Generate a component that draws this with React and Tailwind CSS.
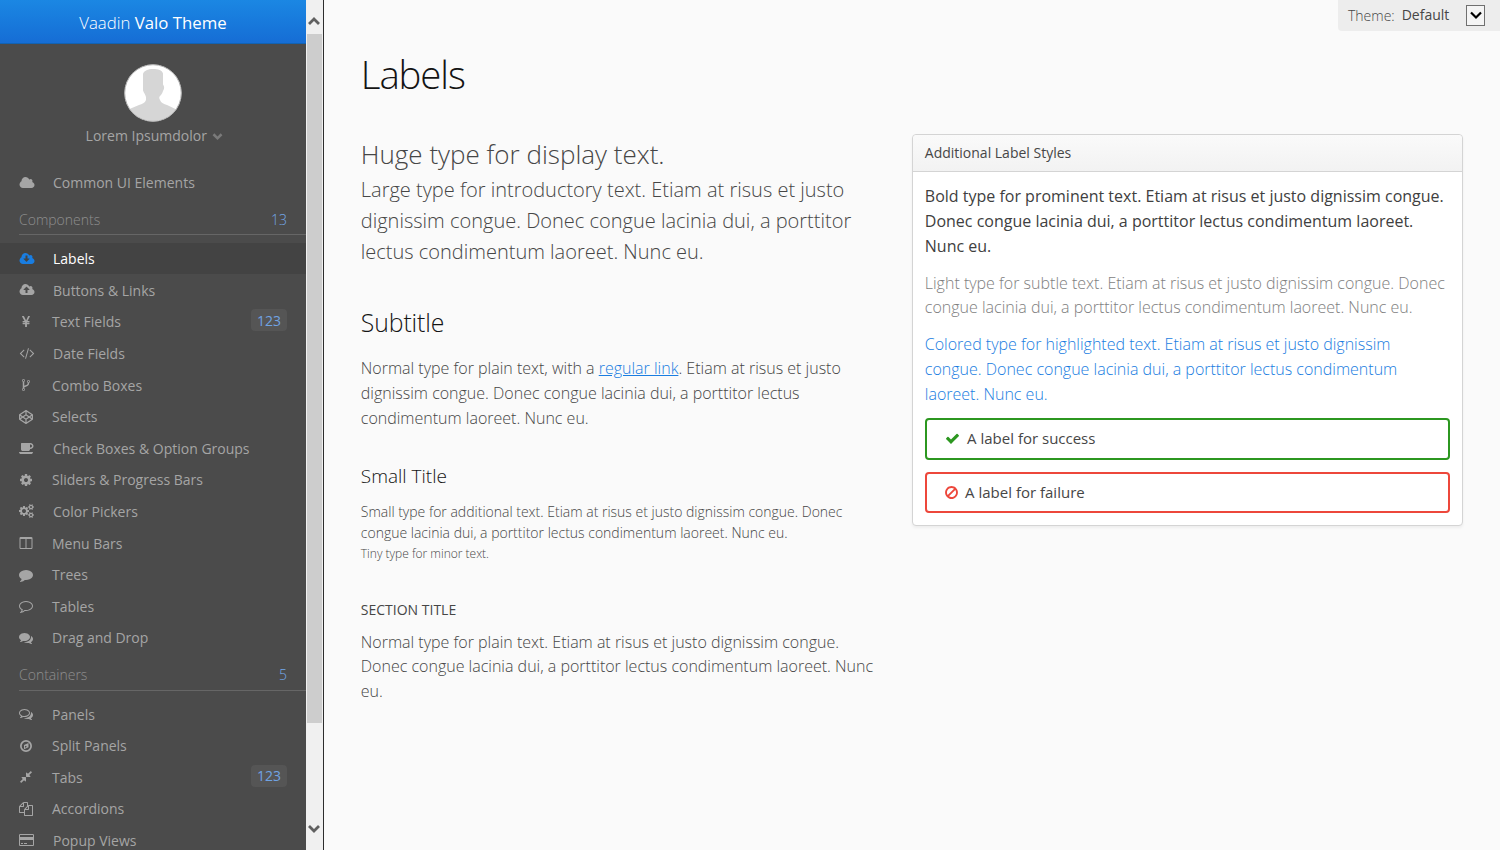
import React from "react";
import { FaCodepen } from "react-icons/fa";

const cloudBody =
  "q0 159-112.5 271.5t-271.5 112.5h-1088q-185 0-316.5-131.5t-131.5-316.5q0-130 70-240t188-165q-2-30-2-43 0-212 150-362t362-150q156 0 285.5 87t188.5 231q71-62 166-62 106 0 181 75t75 181q0 76-41 138 130 31 213.5 135.5t83.5 238.5z";

const ICONS = {
  cloud: [2048, "M1984 1152" + cloudBody],
  download: [2048, "M1344 864q0-14-9-23t-23-9h-224v-352q0-13-9.5-22.5t-22.5-9.5h-192q-13 0-22.5 9.5t-9.5 22.5v352h-224q-13 0-22.5 9.5t-9.5 22.5q0 14 9 23l352 352q9 9 23 9t23-9l351-351q10-12 10-24zM1984 1152" + cloudBody],
  upload: [2048, "M1344 864q0-14-9-23l-352-352q-9-9-23-9t-23 9l-351 351q-10 12-10 24 0 14 9 23t23 9h224v352q0 13 9.5 22.5t22.5 9.5h192q13 0 22.5-9.5t9.5-22.5v-352h224q13 0 22.5-9.5t9.5-22.5zM1984 1152" + cloudBody],
  yen: [1792, "M985.5 1536h-172q-13 0-22.5-9t-9.5-23v-330h-288q-13 0-22.5-9t-9.5-23v-103q0-13 9.5-22.5t22.5-9.5h288v-85h-288q-13 0-22.5-9t-9.5-23v-104q0-13 9.5-22.5t22.5-9.5h214l-321-578q-8-16 0-32 10-16 28-16h194q19 0 29 18l215 425q19 38 56 125 10-24 30.5-68t27.5-61l191-420q8-19 29-19h191q17 0 27 16 9 14 1 31l-313 579h215q13 0 22.5 9.5t9.5 22.5v104q0 14-9.5 23t-22.5 9h-290v85h290q13 0 22.5 9.5t9.5 22.5v103q0 14-9.5 23t-22.5 9h-290v330q0 13-9.5 22.5t-22.5 9.5z"],
  code: [2048, "M681 1399l-50 50q-10 10-23 10t-23-10l-466-466q-10-10-10-23t10-23l466-466q10-10 23-10t23 10l50 50q10 10 10 23t-10 23l-393 393 393 393q10 10 10 23t-10 23zm591-1067l-373 1291q-4 13-15.5 19.5t-23.5 2.5l-62-17q-13-4-19.5-15.5t-2.5-24.5l373-1291q4-13 15.5-19.5t23.5-2.5l62 17q13 4 19.5 15.5t2.5 24.5zm657 651l-466 466q-10 10-23 10t-23-10l-50-50q-10-10-10-23t10-23l393-393-393-393q-10-10-10-23t10-23l50-50q10-10 23-10t23 10l466 466q10 10 10 23t-10 23z"],
  fork: [1792, "M672 1472q0-40-28-68t-68-28-68 28-28 68 28 68 68 28 68-28 28-68zm0-1152q0-40-28-68t-68-28-68 28-28 68 28 68 68 28 68-28 28-68zm640 128q0-40-28-68t-68-28-68 28-28 68 28 68 68 28 68-28 28-68zm96 0q0 52-26 96.5t-70 69.5q-2 287-226 414-67 38-203 81-128 40-169.5 71t-41.5 100v26q44 25 70 69.5t26 96.5q0 80-56 136t-136 56-136-56-56-136q0-52 26-96.5t70-69.5v-820q-44-25-70-69.5t-26-96.5q0-80 56-136t136-56 136 56 56 136q0 52-26 96.5t-70 69.5v497q54-26 154-57 55-17 87.5-29.5t70.5-31 59-39.5 40.5-51 28-69.5 8.5-91.5q-44-25-70-69.5t-26-96.5q0-80 56-136t136-56 136 56 56 136z"],
  coffee: [1920, "M1664 640q0-80-56-136t-136-56h-64v384h64q80 0 136-56t56-136zm-1664 768h1792q0 106-75 181t-181 75h-1280q-106 0-181-75t-75-181zm1856-768q0 159-112.5 271.5t-271.5 112.5h-64v32q0 92-66 158t-158 66h-704q-92 0-158-66t-66-158v-736q0-26 19-45t45-19h1152q159 0 271.5 112.5t112.5 271.5z"],
  cog: [1792, "M1152 896q0-106-75-181t-181-75-181 75-75 181 75 181 181 75 181-75 75-181zm512-109v222q0 12-8 23t-20 13l-185 28q-19 54-39 91 35 50 107 138 10 12 10 25t-9 23q-27 37-99 108t-94 71q-12 0-26-9l-138-108q-44 23-91 38-16 136-29 186-7 28-36 28h-222q-14 0-24.5-8.5t-11.5-21.5l-28-184q-49-16-90-37l-141 107q-10 9-25 9-14 0-25-11-126-114-165-168-7-10-7-23 0-12 8-23 15-21 51-66.5t54-70.5q-27-50-41-99l-183-27q-13-2-21-12.5t-8-23.5v-222q0-12 8-23t19-13l186-28q14-46 39-92-40-57-107-138-10-12-10-24 0-10 9-23 26-36 98.5-107.5t94.5-71.5q13 0 26 10l138 107q44-23 91-38 16-136 29-186 7-28 36-28h222q14 0 24.5 8.5t11.5 21.5l28 184q49 16 90 37l142-107q9-9 24-9 13 0 25 10 129 119 165 170 7 8 7 22 0 12-8 23-15 21-51 66.5t-54 70.5q26 50 41 98l183 28q13 2 21 12.5t8 23.5z"],
  cogs: [1920, "M896 896q0-106-75-181t-181-75-181 75-75 181 75 181 181 75 181-75 75-181zm768 512q0-52-38-90t-90-38-90 38-38 90q0 53 37.5 90.5t90.5 37.5 90.5-37.5 37.5-90.5zm0-1024q0-52-38-90t-90-38-90 38-38 90q0 53 37.5 90.5t90.5 37.5 90.5-37.5 37.5-90.5zm-384 421v185q0 10-7 19.5t-16 10.5l-155 24q-11 35-32 76 34 48 90 115 7 11 7 20 0 12-7 19-23 30-82.5 89.5t-78.5 59.5q-11 0-21-7l-115-90q-37 19-77 31-11 108-23 155-7 24-30 24h-186q-11 0-20-7.5t-10-17.5l-23-153q-34-10-75-31l-118 89q-7 7-20 7-11 0-21-8-144-133-144-160 0-9 7-19 10-14 41-53t47-61q-23-44-35-82l-152-24q-10-1-17-9.5t-7-19.5v-185q0-10 7-19.5t16-10.5l155-24q11-35 32-76-34-48-90-115-7-11-7-20 0-12 7-20 22-30 82-89t79-59q11 0 21 7l115 90q34-18 77-32 11-108 23-154 7-24 30-24h186q11 0 20 7.5t10 17.5l23 153q34 10 75 31l118-89q8-7 20-7 11 0 21 8 144 133 144 160 0 8-7 19-12 16-42 54t-45 60q23 48 34 82l152 23q10 2 17 10.5t7 19.5zm640 533v140q0 16-149 31-12 27-30 52 51 113 51 138 0 4-4 7-122 71-124 71-8 0-46-47t-52-68q-20 2-30 2t-30-2q-14 21-52 68t-46 47q-2 0-124-71-4-3-4-7 0-25 51-138-18-25-30-52-149-15-149-31v-140q0-16 149-31 13-29 30-52-51-113-51-138 0-4 4-7 4-2 35-20t59-34 30-16q8 0 46 46.5t52 67.5q20-2 30-2t30 2q51-71 92-112l6-2q4 0 124 70 4 3 4 7 0 25-51 138 17 23 30 52 149 15 149 31zm0-1024v140q0 16-149 31-12 27-30 52 51 113 51 138 0 4-4 7-122 71-124 71-8 0-46-47t-52-68q-20 2-30 2t-30-2q-14 21-52 68t-46 47q-2 0-124-71-4-3-4-7 0-25 51-138-18-25-30-52-149-15-149-31v-140q0-16 149-31 13-29 30-52-51-113-51-138 0-4 4-7 4-2 35-20t59-34 30-16q8 0 46 46.5t52 67.5q20-2 30-2t30 2q51-71 92-112l6-2q4 0 124 70 4 3 4 7 0 25-51 138 17 23 30 52 149 15 149 31z"],
  columns: [1792, "M224 1536h608v-1152h-640v1120q0 13 9.5 22.5t22.5 9.5zm1376-32v-1120h-640v1152h608q13 0 22.5-9.5t9.5-22.5zm128-1216v1216q0 66-47 113t-113 47h-1344q-66 0-113-47t-47-113v-1216q0-66 47-113t113-47h1344q66 0 113 47t47 113z"],
  comment: [1792, "M1792 896q0 174-120 321.5t-326 233-450 85.5q-70 0-145-8-198 175-460 242-49 14-114 22-17 2-30.5-9t-17.5-29v-1q-3-4-.5-12t2-10 4.5-9.5l6-9 7-8.5 8-9q7-8 31-34.5t34.5-38 31-39.5 32.5-51 27-59 26-76q-157-89-247.5-220t-90.5-281q0-130 71-248.5t191-204.5 286-136.5 348-50.5q244 0 450 85.5t326 233 120 321.5z"],
  commentO: [1792, "M896 384q-204 0-381.5 69.5t-282 187.5-104.5 255q0 112 71.5 213.5t201.5 175.5l87 50-27 96q-24 91-70 172 152-63 275-171l43-38 57 6q69 8 130 8 204 0 381.5-69.5t282-187.5 104.5-255-104.5-255-282-187.5-381.5-69.5zm896 512q0 174-120 321.5t-326 233-450 85.5q-70 0-145-8-198 175-460 242-49 14-114 22h-5q-15 0-27-10.5t-16-27.5v-1q-3-4-.5-12t2-10 4.5-9.5l6-9 7-8.5 8-9q7-8 31-34.5t34.5-38 31-39.5 32.5-51 27-59 26-76q-157-89-247.5-220t-90.5-281q0-174 120-321.5t326-233 450-85.5 450 85.5 326 233 120 321.5z"],
  comments: [1792, "M1408 768q0 139-94 257t-256.5 186.5-353.5 68.5q-86 0-176-16-124 88-278 128-36 9-86 16h-3q-11 0-20.5-8t-11.5-21q-1-3-1-6.5t.5-6.5 2-6l2.5-5 3.5-5.5 4-5 4.5-5 4-4.5q5-6 23-25t26-29.5 22.5-29 25-38.5 20.5-44q-124-72-195-177t-71-224q0-139 94-257t256.5-186.5 353.5-68.5 353.5 68.5 256.5 186.5 94 257zm384 256q0 120-71 224.5t-195 176.5q10 24 20.5 44t25 38.5 22.5 29 26 29.5 23 25q1 1 4 4.5t4.5 5 4 5 3.5 5.5l2.5 5 2 6 .5 6.5-1 6.5q-3 14-13 22t-22 7q-50-7-86-16-154-40-278-128-90 16-176 16-271 0-472-132 58 4 88 4 161 0 309-45t264-129q125-92 192-212t67-254q0-77-23-152 129 71 204 178t75 230z"],
  commentsO: [1792, "M704 384q-153 0-286 52t-211.5 141-78.5 191q0 82 53 158t149 132l97 56-35 84q34-20 62-39l44-31 53 10q78 14 153 14 153 0 286-52t211.5-141 78.5-191-78.5-191-211.5-141-286-52zm0-128q191 0 353.5 68.5t256.5 186.5 94 257-94 257-256.5 186.5-353.5 68.5q-86 0-176-16-124 88-278 128-36 9-86 16h-3q-11 0-20.5-8t-11.5-21q-1-3-1-6.5t.5-6.5 2-6l2.5-5 3.5-5.5 4-5 4.5-5 4-4.5q5-6 23-25t26-29.5 22.5-29 25-38.5 20.5-44q-124-72-195-177t-71-224q0-139 94-257t256.5-186.5 353.5-68.5zm822 1169q10 24 20.5 44t25 38.5 22.5 29 26 29.5 23 25q1 1 4 4.5t4.5 5 4 5 3.5 5.5l2.5 5 2 6 .5 6.5-1 6.5q-3 14-13 22t-22 7q-50-7-86-16-154-40-278-128-90 16-176 16-271 0-472-132 58 4 88 4 161 0 309-45t264-129q125-92 192-212t67-254q0-77-23-152 129 71 204 178t75 230q0 120-71 224.5t-195 176.5z"],
  compass: [1792, "M1216 512v544l-576 256v-544zM768 850v270l256-114zM896 352a544 544 0 1 0 0 1088a544 544 0 1 0 0-1088zM896 128a768 768 0 1 1 0 1536a768 768 0 1 1 0-1536z"],
  compress: [1792, "M896 960v448q0 26-19 45t-45 19-45-19l-144-144-332 332q-10 10-23 10t-23-10l-114-114q-10-10-10-23t10-23l332-332-144-144q-19-19-19-45t19-45 45-19h448q26 0 45 19t19 45zm755-672q0 13-10 23l-332 332 144 144q19 19 19 45t-19 45-45 19h-448q-26 0-45-19t-19-45v-448q0-26 19-45t45-19 45 19l144 144 332-332q10-10 23-10t23 10l114 114q10 10 10 23z"],
  copy: [1792, "M1696 384q40 0 68 28t28 68v1216q0 40-28 68t-68 28h-960q-40 0-68-28t-28-68v-288h-544q-40 0-68-28t-28-68v-672q0-40 20-88t48-76l408-408q28-28 76-48t88-20h416q40 0 68 28t28 68v328q68-40 128-40h416zm-544 213l-299 299h299v-299zm-640-384l-299 299h299v-299zm196 647l316-316v-416h-384v416q0 40-28 68t-68 28h-416v640h512v-256q0-40 20-88t48-76zm956 804v-1152h-384v416q0 40-28 68t-68 28h-416v640h896z"],
  card: [1920, "M1760 128q66 0 113 47t47 113v1216q0 66-47 113t-113 47h-1600q-66 0-113-47t-47-113v-1216q0-66 47-113t113-47h1600zm-1600 128q-13 0-22.5 9.5t-9.5 22.5v224h1664v-224q0-13-9.5-22.5t-22.5-9.5h-1600zm1600 1280q13 0 22.5-9.5t9.5-22.5v-608h-1664v608q0 13 9.5 22.5t22.5 9.5h1600zm-1504-128v-128h256v128h-256zm384 0v-128h384v128h-384z"],
  check: [1792, "M1671 566q0 40-28 68l-724 724-136 136q-28 28-68 28t-68-28l-136-136-362-362q-28-28-28-68t28-68l136-136q28-28 68-28t68 28l294 295 656-657q28-28 68-28t68 28l136 136q28 28 28 68z"],
  ban: [1792, "M1440 893q0-161-87-295l-754 753q137 89 297 89 111 0 211.5-43.5t173.5-116.5 116-174.5 43-212.5zm-999 299l755-754q-135-91-300-91-148 0-273 73t-198 199-73 274q0 162 89 299zm1223-299q0 157-61 300t-163.5 246-245 164-298.5 61-298.5-61-245-164-163.5-246-61-300 61-299.5 163.5-245.5 245-164 298.5-61 298.5 61 245 164 163.5 245.5 61 299.5z"],
};

const ICON_SIZES = {
  1792: "h-[14px] w-[14px]",
  1920: "h-[14px] w-[15px]",
  2048: "-mr-px h-[14px] w-[16px]",
};

function Icon({ name, className }) {
  if (name === "codepen") return <FaCodepen className="h-[14px] w-[14px] shrink-0" />;
  const [w, d] = ICONS[name];
  return (
    <svg
      viewBox={`0 0 ${w} 1792`}
      className={`shrink-0 ${className || ICON_SIZES[w]}`}
      preserveAspectRatio="xMinYMid meet"
      fill="currentColor"
      fillRule="evenodd"
    >
      <path d={d} />
    </svg>
  );
}

function Item({ icon, label, badge, active }) {
  return (
    <li
      className={`flex h-[31.6px] shrink-0 items-center pl-[19px] pr-[19px] ${
        active ? "bg-[#434343] text-white" : "text-[#a5a5a5]"
      }`}
    >
      <span className={`flex ${active ? "text-[#197de1]" : ""}`}>
        <Icon name={icon} />
      </span>
      <span className="ml-[19px] grow">{label}</span>
      {badge && (
        <span className="-mt-[3px] flex h-[22px] w-9 items-center justify-center rounded bg-[#555555] text-[#70a3e2]">
          {badge}
        </span>
      )}
    </li>
  );
}

function Section({ label, count, className }) {
  return (
    <div className={`ml-[19px] flex shrink-0 items-center justify-between border-b border-[#666666] pr-[19px] font-light text-[#8e8e8e] ${className}`}>
      <span>{label}</span>
      <span className="text-[#74a9ea]">{count}</span>
    </div>
  );
}

function Arrow({ className, d }) {
  return (
    <svg viewBox="0 0 12 10" className={className} fill="none" stroke="currentColor">
      <path d={d} />
    </svg>
  );
}

const COMPONENTS = [
  { icon: "download", label: "Labels", active: true },
  { icon: "upload", label: "Buttons & Links" },
  { icon: "yen", label: "Text Fields", badge: "123" },
  { icon: "code", label: "Date Fields" },
  { icon: "fork", label: "Combo Boxes" },
  { icon: "codepen", label: "Selects" },
  { icon: "coffee", label: "Check Boxes & Option Groups" },
  { icon: "cog", label: "Sliders & Progress Bars" },
  { icon: "cogs", label: "Color Pickers" },
  { icon: "columns", label: "Menu Bars" },
  { icon: "comment", label: "Trees" },
  { icon: "commentO", label: "Tables" },
  { icon: "comments", label: "Drag and Drop" },
];

const CONTAINERS = [
  { icon: "commentsO", label: "Panels" },
  { icon: "compass", label: "Split Panels" },
  { icon: "compress", label: "Tabs", badge: "123" },
  { icon: "copy", label: "Accordions" },
  { icon: "card", label: "Popup Views" },
];

function Sidebar() {
  return (
    <aside className="flex w-[306px] shrink-0 flex-col overflow-hidden bg-[#4b4b4b] text-[14px]">
      <div className="flex h-11 shrink-0 items-center justify-center border-b border-[#1362b1] bg-linear-to-b from-[#1b87e3] to-[#166dd5] pt-[3px] text-[16.8px] font-light text-white">
        <span className="whitespace-pre">Vaadin <b className="font-normal">Valo Theme</b></span>
      </div>
      <div className="flex h-[123px] shrink-0 flex-col items-center pt-5 text-[#a5a5a5]">
        <svg viewBox="0 0 58 58" className="h-[58px] w-[58px]">
          <defs>
            <clipPath id="avatar"><circle cx="29" cy="29" r="28" /></clipPath>
          </defs>
          <circle cx="29" cy="29" r="28.5" fill="#fff" />
          <path clipPath="url(#avatar)" fill="#d6d6d6" d="M29 5c5 0 9 1 10 4.500v11c1.500 2 1.500 4 0 6.500-1 3-2 4-3 5-1 1-1 2 0 4 1 3 4 4 7 5l9.500 4.500v16H5.500V45L15 41c3-1 6-2 7-5v-3c-1-3-2-4-3-6.500V10c1-3.500 5-5 10-5z" />
          <circle cx="29" cy="29" r="28.3" fill="none" stroke="#b0b0b0" strokeWidth="1" />
        </svg>
        <div className="mt-[3px] flex h-5 items-center gap-[5px] pl-[2.500px]">
          <span>Lorem Ipsumdolor</span>
          <Arrow className="mt-[3px] h-[9px] w-[11px] stroke-[2.8] text-[#7a7a7a]" d="M1.500 2.500L6 7l4.500-4.500" />
        </div>
      </div>
      <ul className="shrink-0"><Item icon="cloud" label="Common UI Elements" /></ul>
      <div className="mt-[6px] flex shrink-0 flex-col pb-[8.300px]">
        <Section className="h-[30px] pt-px" label="Components" count="13" />
      </div>
      <ul className="shrink-0">
        {COMPONENTS.map((i) => <Item key={i.label} {...i} />)}
      </ul>
      <div className="mt-[6px] flex shrink-0 flex-col">
        <Section className="h-[31px]" label="Containers" count="5" />
      </div>
      <ul className="mt-[7.700px] shrink-0">
        {CONTAINERS.map((i) => <Item key={i.label} {...i} />)}
      </ul>
    </aside>
  );
}

function Scrollbar() {
  return (
    <div className="flex w-[18px] shrink-0 flex-col border-r border-[#2d2d2d] bg-[#f0f0f0] pl-px pr-px text-[#606060]">
      <div className="flex h-[34px] shrink-0 items-center justify-center pr-[1.500px] pt-[8px]">
        <Arrow className="h-[10px] w-3 stroke-[2.8]" d="M1 8l5-5 5 5" />
      </div>
      <div className="h-[689px] shrink-0 bg-[#cdcdcd]" />
      <div className="flex grow items-end justify-center pb-4 pr-[1.500px]">
        <Arrow className="h-[10px] w-3 stroke-[2.8]" d="M1 2l5 5 5-5" />
      </div>
    </div>
  );
}

function Lines({ lines, className }) {
  return (
    <p className={`whitespace-nowrap ${className}`}>
      {lines.map((l, i) => <span key={i} className="block">{l}</span>)}
    </p>
  );
}

function Panel() {
  return (
    <section className="h-[392px] w-[551px] rounded border border-[#d4d4d4] bg-white shadow-[0_2px_3px_rgba(0,0,0,0.05)]">
      <h4 className="flex h-[37px] items-center rounded-t border-b border-[#d4d4d4] bg-linear-to-b from-[#fafafa] to-[#f2f2f2] pb-[2px] pl-[12px] text-[14px] text-[#464646]">
        Additional Label Styles
      </h4>
      <div className="px-3 pt-[12px] text-[16px] leading-[24.8px]">
        <Lines className="text-[#404040]" lines={["Bold type for prominent text. Etiam at risus et justo dignissim congue.", "Donec congue lacinia dui, a porttitor lectus condimentum laoreet.", "Nunc eu."]} />
        <Lines className="mt-[12.200px] font-light text-[#7e7e7e]" lines={["Light type for subtle text. Etiam at risus et justo dignissim congue. Donec", "congue lacinia dui, a porttitor lectus condimentum laoreet. Nunc eu."]} />
        <Lines className="mt-[12px] font-light text-[#197de1]" lines={["Colored type for highlighted text. Etiam at risus et justo dignissim", "congue. Donec congue lacinia dui, a porttitor lectus condimentum", "laoreet. Nunc eu."]} />
        <div className="mt-[11.600px] flex h-[42px] items-center rounded border-2 border-[#2c9720] pb-[2px] pl-[18px] text-[15px] text-[#464646]">
          <Icon name="check" className="h-[15px] w-[15px] text-[#2c9720]" />
          <span className="ml-[7.300px]">A label for success</span>
        </div>
        <div className="mt-3 flex h-[41px] items-center rounded border-2 border-[#ed473b] pl-[17px] text-[15px] text-[#464646]">
          <Icon name="ban" className="h-[15px] w-[15px] text-[#ed473b]" />
          <span className="ml-[6.300px]">A label for failure</span>
        </div>
      </div>
    </section>
  );
}

export default function App() {
  return (
    <div className="flex h-[850px] w-[1500px] overflow-hidden bg-[#fafafa] font-['Open_Sans','Noto_Sans',sans-serif] text-[#464646]">
      <Sidebar />
      <Scrollbar />
      <main className="flex grow flex-col pl-[36.800px]">
        <div className="flex h-[53px] items-start justify-end">
          <div className="flex h-[31px] w-[162px] items-center rounded-bl bg-[#ededed] pl-[10px] text-[14px]">
            <span className="font-light">Theme:</span>
            <span className="ml-[7px] mb-[2px] grow">Default</span>
            <span className="mr-[15px] flex h-[21px] w-[19px] items-center justify-center border border-[#707070] bg-[#f5f5f5] pb-px text-black">
              <Arrow className="h-[10px] w-3 stroke-[2.2]" d="M1 2.500l5 5 5-5" />
            </span>
          </div>
        </div>
        <h1 className="h-[81px] text-[38.4px] font-light leading-[42px] tracking-[-1.1px] text-[#141414]">Labels</h1>
        <div className="flex">
          <div className="w-[551px] text-[16px] font-light leading-[24.8px]">
            <Lines className="pb-px pt-px text-[26px] leading-[38px]" lines={["Huge type for display text."]} />
            <Lines className="text-[20px] leading-[31px]" lines={["Large type for introductory text. Etiam at risus et justo", "dignissim congue. Donec congue lacinia dui, a porttitor", "lectus condimentum laoreet. Nunc eu."]} />
            <h2 className="mt-[38px] text-[24.8px] leading-[34px] tracking-[-0.1px] text-[#141414]">Subtitle</h2>
            <Lines className="mt-[17px]" lines={[
              <>Normal type for plain text, with a <a className="text-[#197de1] underline">regular link</a>. Etiam at risus et justo</>,
              "dignissim congue. Donec congue lacinia dui, a porttitor lectus",
              "condimentum laoreet. Nunc eu.",
            ]} />
            <h3 className="mt-[32.600px] text-[19px] leading-[26px] text-[#141414]">Small Title</h3>
            <Lines className="mt-3 text-[14px] leading-[21px]" lines={["Small type for additional text. Etiam at risus et justo dignissim congue. Donec", "congue lacinia dui, a porttitor lectus condimentum laoreet. Nunc eu."]} />
            <Lines className="pt-[2px] text-[12px] leading-[18px]" lines={["Tiny type for minor text."]} />
            <h4 className="mt-[36px] text-[14px] font-normal leading-[21px] text-[#464646]">SECTION TITLE</h4>
            <Lines className="mt-[9.600px]" lines={["Normal type for plain text. Etiam at risus et justo dignissim congue.", "Donec congue lacinia dui, a porttitor lectus condimentum laoreet. Nunc", "eu."]} />
          </div>
          <Panel />
        </div>
      </main>
    </div>
  );
}
